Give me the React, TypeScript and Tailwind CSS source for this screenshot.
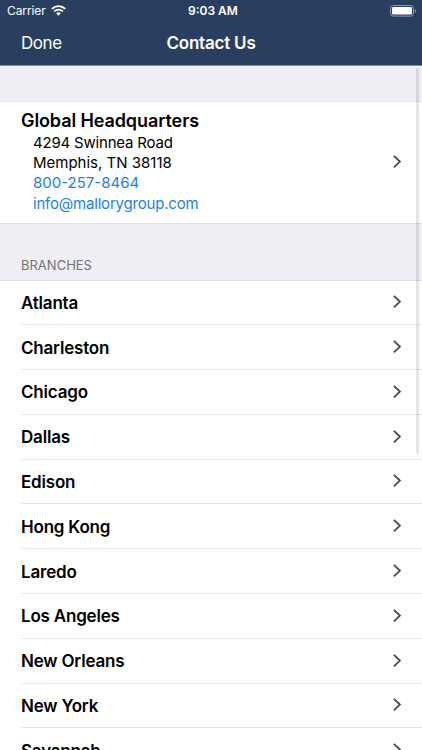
const branches = [
  "Atlanta",
  "Charleston",
  "Chicago",
  "Dallas",
  "Edison",
  "Hong Kong",
  "Laredo",
  "Los Angeles",
  "New Orleans",
  "New York",
  "Savannah",
];

export default function App() {
  return (
    <div className="relative flex h-[750px] w-[422px] flex-col overflow-hidden bg-white font-['Inter','Liberation_Sans',sans-serif] text-black">
      <header className="h-[66px] shrink-0 border-b border-[#7d8ba5] bg-[#2a3f5f] text-white">
        <StatusBar />
        <div className="grid h-[43px] grid-cols-3 items-center px-[21px] pb-px">
          <button type="button" className="text-left text-[17px] leading-6 tracking-[-0.45px]">
            Done
          </button>
          <h1 className="whitespace-nowrap text-center text-[17px] font-semibold leading-6 tracking-[-0.2px]">
            Contact Us
          </h1>
        </div>
      </header>

      <main className="flex-1">
        <div className="h-[36px] border-b border-[#e4e4e9] bg-[#efeef4]" />

        <section className="flex h-[121px] items-center pb-[2px] pl-[21px] pr-[20px]">
          <div className="flex-1">
            <h2 className="text-[18px] font-semibold leading-[23px] tracking-[-0.1px]">
              Global Headquarters
            </h2>
            <div className="pl-3 pt-[0.8px] text-[15px] leading-[20.3px]">
              <p className="tracking-[-0.2px]">4294 Swinnea Road</p>
              <p>Memphis, TN 38118</p>
              <p className="text-[#1b80e8]">800-257-8464</p>
              <p className="tracking-[-0.2px] text-[#1b80e8]">info@mallorygroup.com</p>
            </div>
          </div>
          <Chevron />
        </section>

        <h3 className="flex h-[58px] items-end border-y border-[#dfdfe4] bg-[#efeef4] pb-[5px] pl-[21px] text-[13px] leading-[20px] text-[#737378]">
          BRANCHES
        </h3>

        <ul className="-mt-[0.6px]">
          {branches.map((name) => (
            <li key={name} className="pl-[21px]">
              <div className="flex h-[44.8px] items-center justify-between border-b border-[#e6e6e8] pr-[20px]">
                <span className="pt-[1.1px] text-[17px] font-semibold leading-6 tracking-[-0.2px]">
                  {name}
                </span>
                <Chevron />
              </div>
            </li>
          ))}
        </ul>
      </main>

      {/* scroll indicator */}
      <div className="absolute right-[3px] top-[68px] h-[386px] w-[3px] rounded-full bg-black/10" />
    </div>
  );
}

function StatusBar() {
  return (
    <div className="grid h-[22px] grid-cols-3 items-center pl-[7px] pr-[5px] text-[12px] leading-4">
      <div className="flex items-center gap-[5px]">
        <span className="tracking-[-0.1px]">Carrier</span>
        <svg className="mb-px" width="15" height="11" viewBox="0 0 15 11" fill="none" stroke="white">
          <path d="M0.8 3.9a9.5 9.5 0 0 1 13.4 0" strokeWidth="1.8" />
          <path d="M3.1 6.4a6.2 6.2 0 0 1 8.8 0" strokeWidth="1.8" />
          <path d="M7.5 10.8 5.1 8.3a3.5 3.5 0 0 1 4.8 0z" fill="white" stroke="none" />
        </svg>
      </div>
      <span className="pl-[2px] text-center font-semibold">9:03 AM</span>
      <svg className="justify-self-end" width="27" height="12" viewBox="0 0 27 12">
        <rect x="0.5" y="0.5" width="23" height="10.6" rx="2.8" fill="none" stroke="#8f9bb0" />
        <rect x="2" y="2" width="20" height="7.6" rx="1.4" fill="white" />
        <path d="M24.8 4v3.8c1.6-.6 1.6-3.2 0-3.8z" fill="#8f9bb0" />
      </svg>
    </div>
  );
}

function Chevron() {
  return (
    <svg
      width="10"
      height="14"
      viewBox="0 0 10 14"
      fill="none"
      stroke="#48484a"
      strokeWidth="1.8"
    >
      <path d="M1.9 0.8 7.9 6.6 1.9 12.4" />
    </svg>
  );
}
